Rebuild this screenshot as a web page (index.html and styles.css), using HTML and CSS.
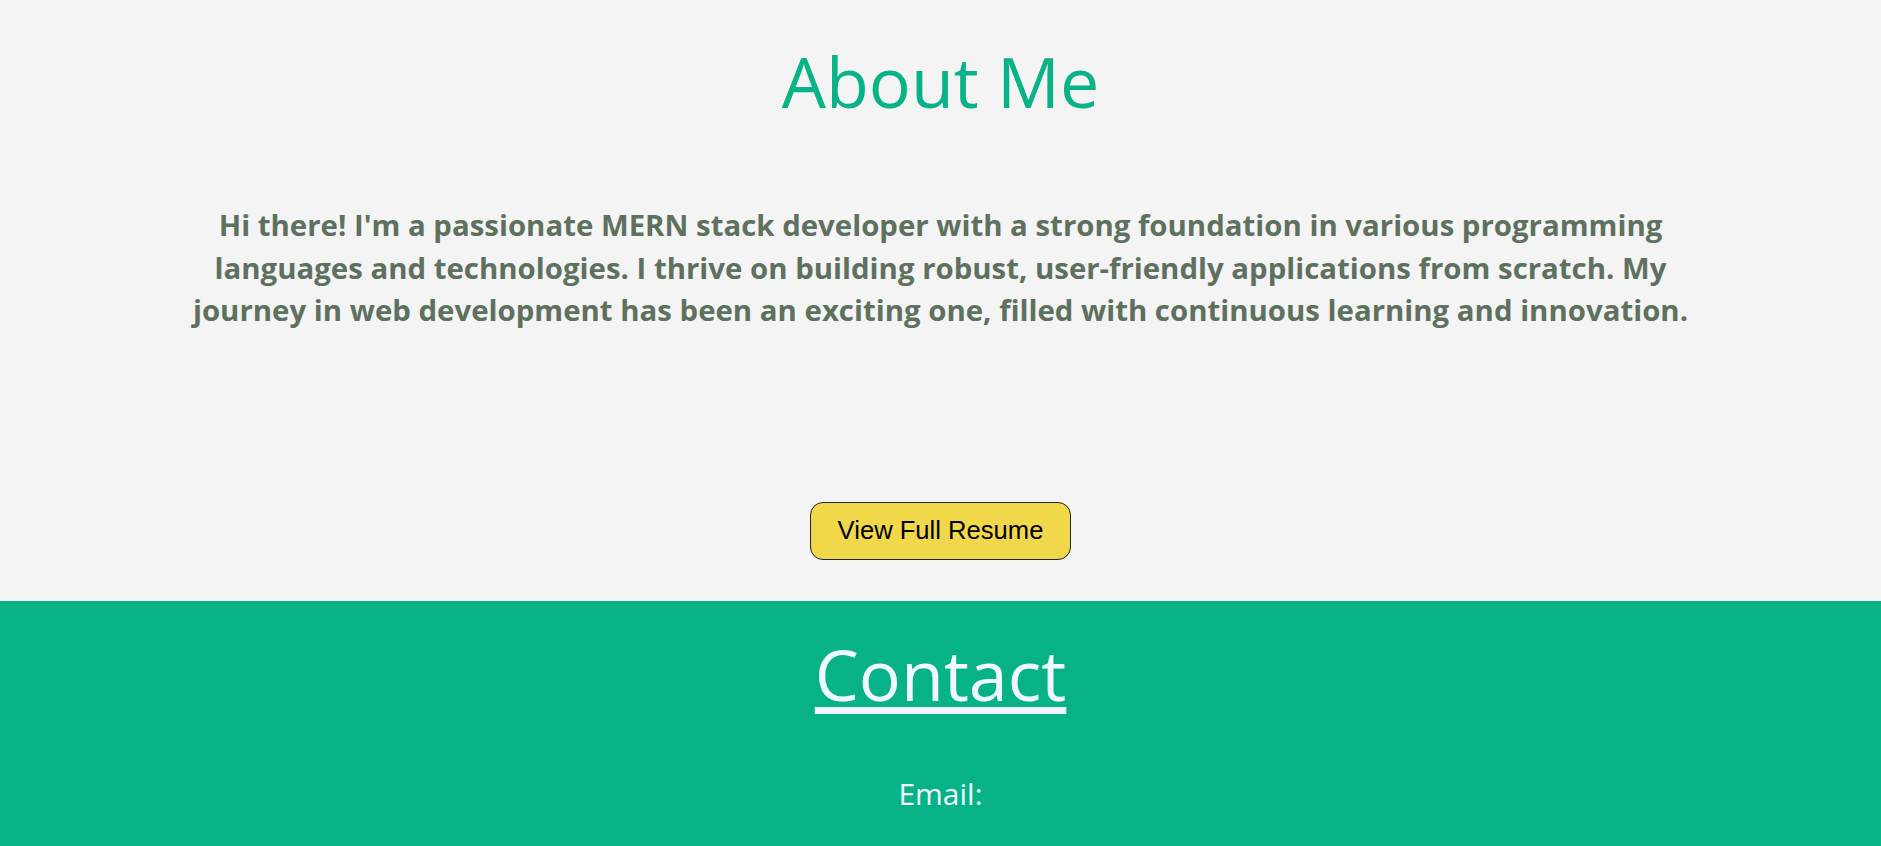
FILE: index.html
```html
<!DOCTYPE html>
<html lang="en">
<head>
<meta charset="utf-8">
<title>Portfolio</title>
<link rel="stylesheet" href="styles.css">
</head>
<body>
<section class="about">
  <h1 class="about-title">About Me</h1>
  <p class="about-text">Hi there! I'm a passionate MERN stack developer with a strong foundation in various programming languages and technologies. I thrive on building robust, user-friendly applications from scratch. My journey in web development has been an exciting one, filled with continuous learning and innovation.</p>
  <button class="resume-btn" type="button">View Full Resume</button>
</section>
<section class="contact">
  <h2 class="contact-title">Contact</h2>
  <p class="contact-email">Email:</p>
</section>
</body>
</html>
```
FILE: styles.css
```css
* { box-sizing: border-box; }
html, body { margin: 0; padding: 0; }
body {
  font-family: "Comic Sans MS", "Open Sans", "DejaVu Sans", sans-serif;
  background: #f4f4f4;
  overflow: hidden;
}
.about {
  height: 601px;
  display: flex;
  flex-direction: column;
  align-items: center;
  padding-top: 32px;
}
.about-title {
  margin: 0;
  font-size: 70px;
  font-weight: 400;
  line-height: 1.4;
  color: #0ab387;
}
.about-text {
  margin: 74px 0 0;
  width: 1500px;
  text-align: center;
  font-size: 29.4px;
  font-weight: 700;
  line-height: 42.5px;
  color: #5e715f;
}
.resume-btn {
  margin-top: 170px;
  font-family: "Liberation Sans", Arial, sans-serif;
  font-size: 25.6px;
  padding: 13.5px 27px;
  background: #f0d84a;
  color: #000;
  border: 1px solid #222;
  border-radius: 13px;
  line-height: 1.15;
}
.contact {
  background: #08b287;
  height: 260px;
  display: flex;
  flex-direction: column;
  align-items: center;
  padding-top: 24px;
  color: #f0f8ff;
}
.contact-title {
  margin: 0;
  font-size: 70px;
  font-weight: 400;
  line-height: 1.4;
  text-decoration: underline;
  text-decoration-thickness: 7px;
  text-underline-offset: 6px;
}
.contact-email {
  margin: 50px 0 0;
  font-size: 30px;
  line-height: 1.4;
}
```
